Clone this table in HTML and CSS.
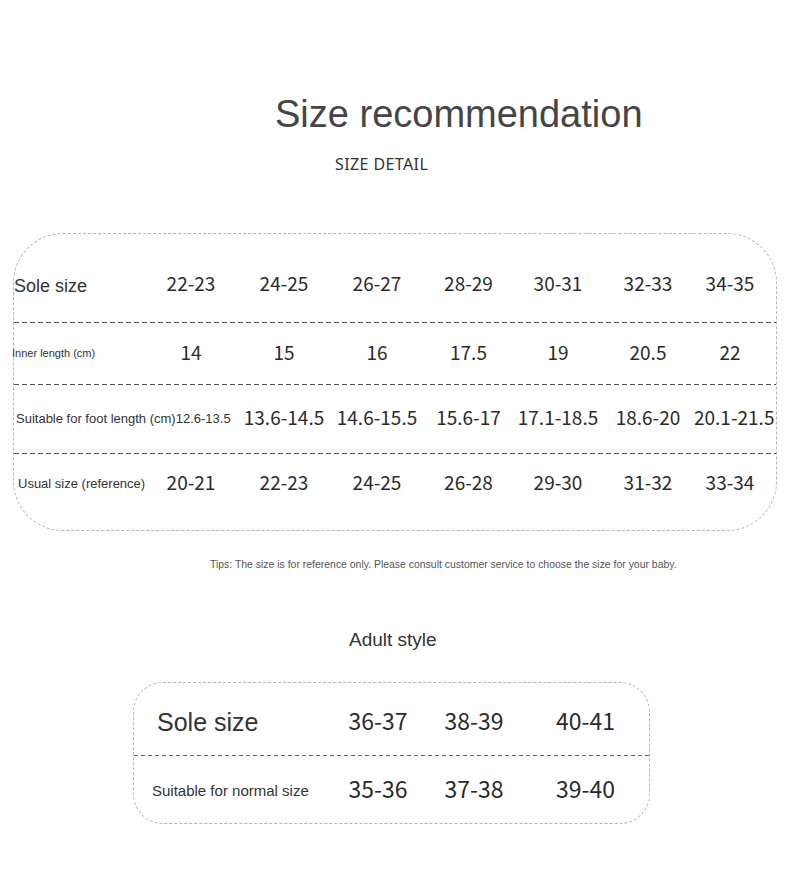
FILE: index.html
```html
<!DOCTYPE html>
<html>
<head>
<meta charset="utf-8">
<link rel="stylesheet" href="styles.css">
</head>
<body>
<div class="page">
  <h1 class="title">Size recommendation</h1>
  <div class="subtitle">SIZE DETAIL</div>

  <div class="chart">
    <div class="row row-1">
      <div class="label label-1">Sole size</div>
      <div class="val">22-23</div><div class="val">24-25</div><div class="val">26-27</div><div class="val">28-29</div><div class="val">30-31</div><div class="val">32-33</div><div class="val">34-35</div>
    </div>
    <div class="row row-2">
      <div class="label label-2">Inner length (cm)</div>
      <div class="val">14</div><div class="val">15</div><div class="val">16</div><div class="val">17.5</div><div class="val">19</div><div class="val">20.5</div><div class="val">22</div>
    </div>
    <div class="row row-3">
      <div class="label label-3 span2">Suitable for foot length (cm)12.6-13.5</div>
      <div class="val">13.6-14.5</div><div class="val">14.6-15.5</div><div class="val">15.6-17</div><div class="val">17.1-18.5</div><div class="val">18.6-20</div><div class="val">20.1-21.5</div>
    </div>
    <div class="row row-4">
      <div class="label label-4">Usual size (reference)</div>
      <div class="val">20-21</div><div class="val">22-23</div><div class="val">24-25</div><div class="val">26-28</div><div class="val">29-30</div><div class="val">31-32</div><div class="val">33-34</div>
    </div>
  </div>

  <p class="tips">Tips: The size is for reference only. Please consult customer service to choose the size for your baby.</p>

  <h2 class="adult-title">Adult style</h2>

  <div class="adult">
    <div class="arow arow-1">
      <div class="alabel alabel-1">Sole size</div>
      <div class="aval">36-37</div><div class="aval">38-39</div><div class="aval">40-41</div>
    </div>
    <div class="arow arow-2">
      <div class="alabel alabel-2">Suitable for normal size</div>
      <div class="aval">35-36</div><div class="aval">37-38</div><div class="aval">39-40</div>
    </div>
  </div>
</div>
</body>
</html>
```
FILE: styles.css
```css
html, body {
  margin: 0;
  padding: 0;
  background: #ffffff;
}

.page {
  width: 790px;
  min-height: 885px;
  padding-top: 92px;
  box-sizing: border-box;
  font-family: "Liberation Sans", Arial, sans-serif;
  color: #333333;
}

.title {
  margin: 0 0 0 275px;
  font-weight: normal;
  font-size: 38px;
  line-height: 44px;
  color: #454545;
  white-space: nowrap;
}

.subtitle {
  margin: 18px 0 0 335px;
  font-family: "Noto Sans", "Noto Sans CJK SC", sans-serif;
  font-size: 16px;
  line-height: 20px;
  letter-spacing: 0.4px;
  color: #333333;
}

/* Kids chart */
.chart {
  margin: 59px 0 0 13px;
  width: 764px;
  box-sizing: border-box;
  border: 1px dashed #b4b4b4;
  border-radius: 50px;
}

.row {
  display: grid;
  grid-template-columns: 131px 92px 94px 92px 91px 88px 92px 72px 1fr;
  align-items: center;
}

.row + .row {
  background-image: repeating-linear-gradient(to right, #4a4a4a 0 5px, transparent 5px 8px);
  background-size: 100% 1px;
  background-repeat: no-repeat;
  background-position: top left;
}

.row-1 { height: 88px; padding-top: 16px; box-sizing: border-box; }
.row-2 { height: 62px; }
.row-3 { height: 69px; }
.row-4 { height: 77px; padding-bottom: 16px; box-sizing: border-box; }

.label {
  white-space: nowrap;
  color: #333333;
}

.label-1 { font-size: 18px; padding-left: 0; }
.label-2 { font-size: 11px; margin-left: -2px; }
.label-3 { font-size: 13px; padding-left: 2px; }
.label-4 { font-size: 13px; padding-left: 4px; }

.span2 { grid-column: span 2; }

.val {
  text-align: center;
  white-space: nowrap;
  font-family: "Noto Sans CJK SC", "Noto Sans", sans-serif;
  font-size: 19px;
  color: #2b2b2b;
  padding-bottom: 4px;
}

.row-1 .val { padding-bottom: 7px; }

.tips {
  margin: 28px 0 0 210px;
  font-size: 10.45px;
  line-height: 12px;
  color: #555555;
  white-space: nowrap;
}

.adult-title {
  margin: 58px 0 0 349px;
  font-weight: normal;
  font-size: 19px;
  line-height: 22px;
  color: #333333;
}

.adult {
  margin: 31px 0 0 133px;
  width: 517px;
  box-sizing: border-box;
  border: 1px dashed #b4b4b4;
  border-radius: 30px;
}

.arow {
  display: grid;
  grid-template-columns: 196px 96px 96px 1fr;
  align-items: center;
}

.arow + .arow {
  background-image: repeating-linear-gradient(to right, #6a6a6a 0 4px, transparent 4px 7px);
  background-size: 100% 1px;
  background-repeat: no-repeat;
  background-position: top left;
}

.arow-1 { height: 72px; padding-top: 6px; box-sizing: border-box; }
.arow-2 { height: 68px; padding-top: 2px; box-sizing: border-box; }

.alabel { white-space: nowrap; color: #333333; }
.alabel-1 { font-size: 25px; padding-left: 23px; }
.alabel-2 { font-size: 15px; padding-left: 18px; }

.aval {
  text-align: center;
  font-family: "Noto Sans CJK SC", "Noto Sans", sans-serif;
  font-size: 23px;
  color: #2b2b2b;
  padding-bottom: 4px;
}
```
